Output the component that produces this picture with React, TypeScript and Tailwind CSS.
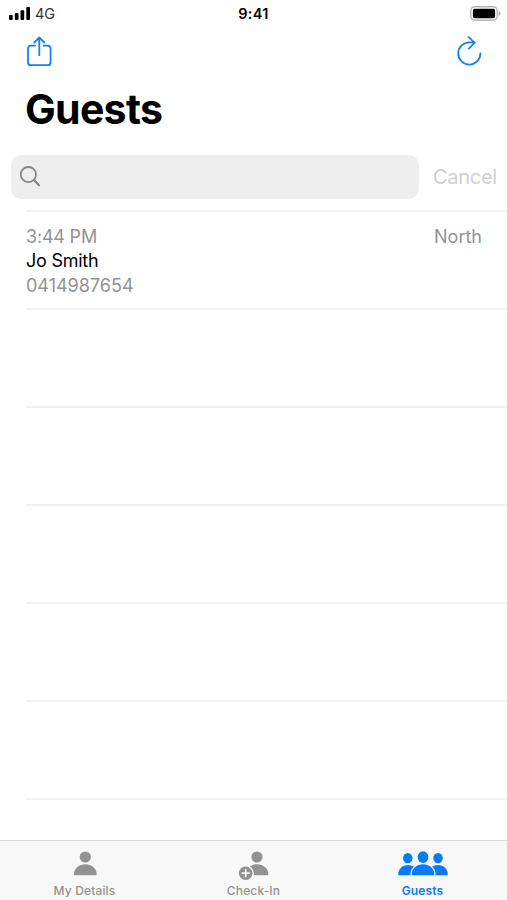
import React from "react";

const BODY = "M-11.4 23.2C-11.4 17.4 -6 13.3 0 13.3S11.4 17.4 11.4 23.2Q11.4 24.2 10.4 24.2H-10.4Q-11.4 24.2 -11.4 23.2Z";

function StatusBar() {
  return (
    <header className="grid h-[27px] grid-cols-3 items-center pl-[9px] pr-[6px] text-black">
      <div className="flex items-center">
        <svg width="22" height="14" viewBox="0 0 22 14" fill="currentColor">
          <rect x="0" y="8" width="3.7" height="5" rx="1" />
          <rect x="5.8" y="6" width="3.7" height="7" rx="1" />
          <rect x="11.5" y="3.2" width="3.7" height="9.8" rx="1" />
          <rect x="17.3" y="0" width="3.7" height="13" rx="1" />
        </svg>
        <span className="ml-[4px] pt-[1px] text-[14.5px] leading-none text-[#333]">4G</span>
      </div>
      <span className="pr-[3px] pt-[1px] text-center text-[14.5px] font-semibold leading-none tracking-[0.3px]">9:41</span>
      <div className="flex justify-end">
        <svg width="31" height="15" viewBox="0 0 31 15">
          <rect x="0.8" y="0.8" width="26.4" height="13.4" rx="4" fill="#fff" stroke="#b5b5b5" strokeWidth="1.4" />
          <rect x="2.9" y="2.7" width="22.2" height="9.5" rx="2" fill="#000" />
          <path d="M28.6 5.1C31.2 6 31.2 9 28.6 9.9Z" fill="#a8a8a8" />
        </svg>
      </div>
    </header>
  );
}

function ShareIcon() {
  return (
    <svg width="26" height="32" viewBox="0 0 26 32" fill="none" stroke="#1480fa" strokeWidth="1.8" strokeLinecap="round" strokeLinejoin="round">
      <path d="M9 9.7H5Q2 9.7 2 12.7V26.2Q2 29.2 5 29.2H21.6Q24.6 29.2 24.6 26.2V12.7Q24.6 9.7 21.6 9.7H17.6" />
      <path d="M13.3 19.2V1.7M8.3 6.5L13.3 1.5L18.3 6.5" />
    </svg>
  );
}

function ReloadIcon() {
  return (
    <svg width="26" height="32" viewBox="0 0 26 32" fill="none" stroke="#1480fa" strokeWidth="1.8" strokeLinecap="round" strokeLinejoin="round">
      <path d="M24.4 17.3A11.1 11.1 0 1 1 13.3 6.4H18.2" />
      <path d="M12.6 1.2L18.6 6.7L12.9 12.6" />
    </svg>
  );
}

const tabs = [
  {
    label: "My Details",
    active: false,
    icon: (
      <g>
        <circle cx="0.3" cy="6" r="5.6" />
        <path d={BODY} transform="translate(0.3 0)" />
      </g>
    ),
  },
  {
    label: "Check-In",
    active: false,
    icon: (
      <g>
        <g transform="translate(3 0)">
          <circle cx="0" cy="6" r="5.6" />
          <path d={BODY} />
        </g>
        <circle cx="-8.3" cy="22.2" r="8.2" fill="#f8f8f8" />
        <circle cx="-8.3" cy="22.2" r="6.8" />
        <path d="M-12.3 22.2H-4.3M-8.3 18.2V26.2" stroke="#f8f8f8" strokeWidth="1.7" />
      </g>
    ),
  },
  {
    label: "Guests",
    active: true,
    icon: (
      <g>
        <ellipse cx="-15.2" cy="7.1" rx="4.8" ry="5.2" />
        <ellipse cx="15" cy="7.1" rx="4.8" ry="5.2" />
        <path d="M-24.8 23.2C-24.8 17.8 -20.4 14 -15 14S-5.2 17.5 -5.2 24.2H-23.8Q-24.8 24.2 -24.8 23.2Z" />
        <path d="M24.8 23.2C24.8 17.8 20.4 14 15 14S5.2 17.5 5.2 24.2H23.8Q24.8 24.2 24.8 23.2Z" />
        <path d={BODY} stroke="#f8f8f8" strokeWidth="2.4" />
        <path d={BODY} />
        <ellipse cx="0" cy="6.1" rx="5.4" ry="5.9" />
      </g>
    ),
  },
];

export default function App() {
  return (
    <div className="flex h-[900px] w-full flex-col overflow-hidden bg-white font-['Inter','Liberation_Sans',sans-serif]">
      <StatusBar />
      <nav className="flex h-[50px] items-start justify-between pl-[26px] pr-[25px] pt-[9px]">
        <button aria-label="Share"><ShareIcon /></button>
        <button aria-label="Reload"><ReloadIcon /></button>
      </nav>
      <h1 className="h-[78px] pl-[25px] pt-[7px] text-[41px] font-bold leading-[50px] tracking-[-0.7px] text-black">Guests</h1>
      <div className="flex h-[44px] items-center pl-[11px]">
        <div className="flex h-[44px] w-[408px] items-center rounded-[10px] bg-[#eeeeee] pl-[9px]">
          <svg width="22" height="22" viewBox="0 0 22 22" fill="none" stroke="#858588" strokeWidth="1.8" strokeLinecap="round">
            <circle cx="8.4" cy="8.6" r="7.6" />
            <path d="M14 14L19 19.3" strokeWidth="2.2" />
          </svg>
        </div>
        <span className="ml-[14px] pb-px text-[20px] tracking-[-0.3px] text-[#cfcfcf]">Cancel</span>
      </div>
      <main className="flex flex-1 flex-col pl-[26px] pt-[11px]">
        <div className="h-[98px] shrink-0 border-t-2 border-[#f1f1f1] pr-[25px] pt-[12.5px] text-[18px] leading-[24.5px] text-[#929292]">
          <div className="flex justify-between">
            <span className="tracking-[-0.2px]">3:44 PM</span>
            <span>North</span>
          </div>
          <div className="tracking-[-0.25px] text-black">Jo Smith</div>
          <div>0414987654</div>
        </div>
        {[1, 2, 3, 4, 5, 6].map((n) => (
          <div key={n} className={n === 6 ? "h-[41px] border-t-2 border-[#f4f4f4]" : "h-[98px] shrink-0 border-t-2 border-[#f1f1f1]"} />
        ))}
      </main>
      <footer className="grid h-[60px] shrink-0 grid-cols-3 border-t border-[#d8d8d8] bg-[#f8f8f8]">
        {tabs.map((tab) => (
          <button key={tab.label} className={`flex flex-col items-center pt-[10px] ${tab.active ? "text-[#087cf8]" : "text-[#929292]"}`}>
            <svg width="60" height="30" viewBox="-30 0 60 30" fill="currentColor">{tab.icon}</svg>
            <span className={`mt-[2px] text-[12px] leading-[16px] tracking-[0.15px] ${tab.active ? "font-semibold" : "font-medium"}`}>{tab.label}</span>
          </button>
        ))}
      </footer>
    </div>
  );
}
